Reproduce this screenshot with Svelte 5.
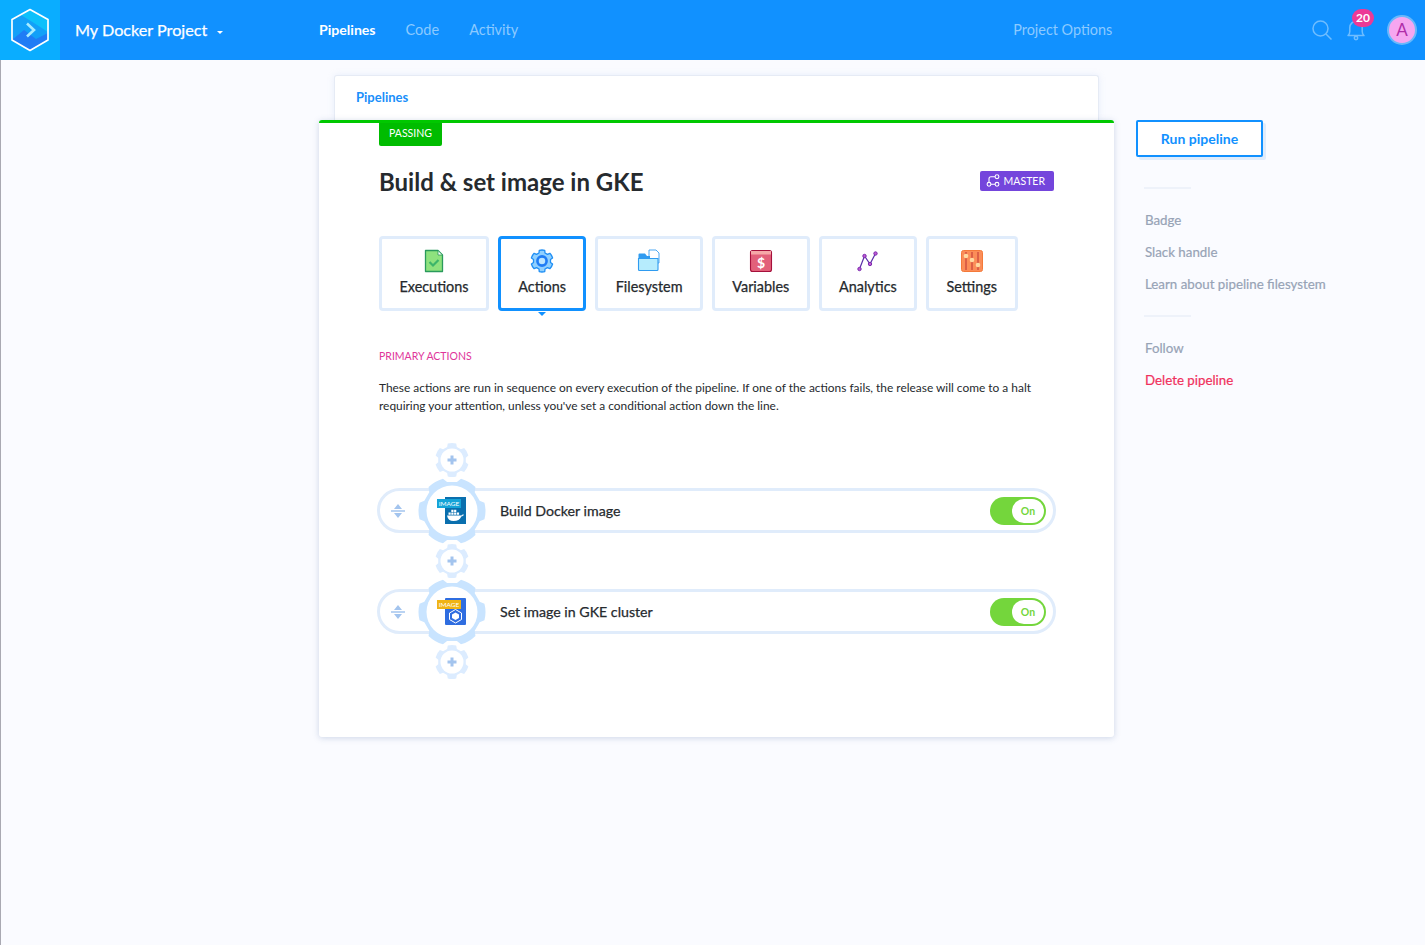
<script>
  const tabs = [
    { name: 'Executions', icon: 'exec' },
    { name: 'Actions', icon: 'actions', active: true },
    { name: 'Filesystem', icon: 'files' },
    { name: 'Variables', icon: 'vars' },
    { name: 'Analytics', icon: 'analytics' },
    { name: 'Settings', icon: 'settings' }
  ];
  const actions = [
    { title: 'Build Docker image', kind: 'docker' },
    { title: 'Set image in GKE cluster', kind: 'gke' }
  ];

  // gear outline with rounded teeth, centred on 0,0
  function gear(teeth, outer, inner, start) {
    const step = (Math.PI * 2) / teeth;
    let d = '';
    for (let i = 0; i < teeth; i++) {
      const a = i * step + start;
      const pts = [
        [inner, a - step * 0.34],
        [outer, a - step * 0.24],
        [outer, a + step * 0.24],
        [inner, a + step * 0.34]
      ].map(([r, t]) => `${(r * Math.cos(t)).toFixed(2)} ${(r * Math.sin(t)).toFixed(2)}`);
      d += `${i ? 'L' : 'M'}${pts[0]} L${pts[1]} A${outer} ${outer} 0 0 1 ${pts[2]} L${pts[3]} `;
    }
    return d + 'Z';
  }
  const bigGear = gear(6, 33.5, 29.5, 0);
  const smallGear = gear(6, 17, 14, -Math.PI / 2);
  const tabGear = gear(6, 11, 8.6, -Math.PI / 2);
</script>

<header class="topbar">
  <div class="logo">
    <svg width="42" height="44" viewBox="0 0 42 44">
      <path d="M21 1.500 39 11.500V32L21 42.500 3 32V11.500Z" fill="#12a0f8" />
      <path d="M21 1.500 39 11.500V24L25 15 12 7Z" fill="#0cc0fb" />
      <path d="M3 32 15 22 27 31 39 25V32L21 42.500Z" fill="#1f7cf5" />
      <path d="M21 1.500 39 11.500V32L21 42.500 3 32V11.500Z" fill="none" stroke="#fff" stroke-width="1.700" stroke-linejoin="round" />
      <path d="M18 15.500 25 22 18 28.500" fill="none" stroke="#a8ecff" stroke-width="2.600" />
    </svg>
  </div>
  <div class="project">My Docker Project <span class="caret"></span></div>
  <nav class="nav">
    <span class="on">Pipelines</span>
    <span>Code</span>
    <span>Activity</span>
  </nav>
  <span class="options">Project Options</span>
  <div class="tools">
    <svg width="20" height="20" viewBox="0 0 20 20" fill="none" stroke="#6fbdff" stroke-width="1.500">
      <circle cx="8.500" cy="8.500" r="7.500" /><path d="M14 14 19.500 19.500" />
    </svg>
    <div class="bell">
      <svg width="20" height="22" viewBox="0 0 20 22" fill="none" stroke="#6fbdff" stroke-width="1.500">
        <path d="M2 16.500c1.300-1 1.800-2 1.800-4V8.500a6.200 6.200 0 0 1 12.400 0v4c0 2 .5 3 1.800 4Z" stroke-linejoin="round" />
        <circle cx="10" cy="19" r="1.700" />
      </svg>
      <span class="count">20</span>
    </div>
    <div class="avatar">A</div>
  </div>
</header>

<div class="page">
  <main class="main">
    <div class="crumb">Pipelines</div>
    <section class="card">
      <span class="status">PASSING</span>
      <div class="title-row">
        <h1>Build &amp; set image in GKE</h1>
        <span class="branch">
          <svg width="14" height="13" viewBox="0 0 14 13" fill="none" stroke="#fff" stroke-width="1.100">
            <circle cx="3" cy="10.300" r="1.900" /><circle cx="11" cy="10.300" r="1.900" /><circle cx="11" cy="2.700" r="1.900" />
            <path d="M9 2.700H5Q3 2.700 3 4.700V8.400M5 10.300H9" />
          </svg>
          MASTER
        </span>
      </div>

      <div class="tabs">
        {#each tabs as tab}
          <div class="tab" class:active={tab.active}>
            <svg width="24" height="24" viewBox="0 0 24 24">
              {#if tab.icon === 'exec'}
                <path d="M3.500 1.500H16L20.500 6V22.500H3.500Z" fill="#8ee27e" stroke="#2a9a5c" stroke-width="1.300" stroke-linejoin="round" />
                <path d="M16 1.500V6H20.500Z" fill="#fff" stroke="#2a9a5c" stroke-width=".8" />
                <path d="M7.500 13 11 16.500 16.500 11" fill="none" stroke="#3cb56a" stroke-width="2.200" />
              {:else if tab.icon === 'actions'}
                <g transform="translate(12 12)">
                  <path d={tabGear} fill="#8fd0ff" stroke="#1f8ff5" stroke-width="1.300" stroke-linejoin="round" />
                  <circle r="4.600" fill="none" stroke="#1f7cf5" stroke-width="2.600" />
                  <circle r="3" fill="#bfe6ff" />
                </g>
              {:else if tab.icon === 'files'}
                <path d="M12 1H19L22 4V14H12Z" fill="#fff" stroke="#3a9ff0" stroke-width=".9" />
                <path d="M1.500 5.500Q1.500 4.500 2.500 4.500H8L10 7H13V21.500H2.500Q1.500 21.500 1.500 20.500Z" fill="#2f9bf0" />
                <path d="M1.500 9.500H21V20.500Q21 21.500 20 21.500H2.500Q1.500 21.500 1.500 20.500Z" fill="#b6ecfd" stroke="#2f9bf0" stroke-width="1.100" />
              {:else if tab.icon === 'vars'}
                <rect x="1.500" y="1.500" width="21" height="21" rx="2" fill="#e2607a" stroke="#a5103c" stroke-width="1.100" />
                <rect x="2" y="2" width="20" height="3.500" fill="#f5a8a8" />
                <text x="12" y="19" class="dollar">$</text>
              {:else if tab.icon === 'analytics'}
                <path d="M3.500 20 8.500 7 14 15 19.500 4.500" fill="none" stroke="#5b2fa8" stroke-width="1.200" />
                <g fill="#c05ad0" stroke="#7a2bb0" stroke-width="1">
                  <circle cx="3.500" cy="20" r="1.700" /><circle cx="8.500" cy="7" r="1.700" /><circle cx="14" cy="15" r="1.700" /><circle cx="19.500" cy="4.500" r="1.700" />
                </g>
              {:else}
                <rect x="1.500" y="1.500" width="21" height="21" rx="2" fill="#fb8d58" stroke="#f47a3a" stroke-width="1" />
                <path d="M6 3V21M12 3V21M18 3V21" stroke="#c9433a" stroke-width="1.200" />
                <circle cx="6" cy="7" r="2.300" fill="#ffd9a0" /><circle cx="12" cy="11" r="2.300" fill="#ffd9a0" /><circle cx="18" cy="16" r="2.300" fill="#ffd9a0" />
              {/if}
            </svg>
            <span>{tab.name}</span>
          </div>
        {/each}
      </div>

      <h2>PRIMARY ACTIONS</h2>
      <p>These actions are run in sequence on every execution of the pipeline. If one of the actions fails, the release will come to a halt requiring your attention, unless you've set a conditional action down the line.</p>

      <div class="flow">
        {#snippet adder()}
          <svg class="adder" width="34" height="36" viewBox="-17 -18 34 36">
            <path d={smallGear} fill="#dcecff" />
            <circle r="11.500" fill="#fff" />
            <path d="M0-4.500V4.500M-4.500 0H4.500" stroke="#a3c4ee" stroke-width="3" />
          </svg>
        {/snippet}
        {@render adder()}
        {#each actions as action}
          <div class="action">
            <svg class="grip" width="14" height="16" viewBox="0 0 14 16">
              <path d="M7 1 11 6H3ZM7 15 3 10H11Z" fill="#a3c4ee" />
              <path d="M0 8H14" stroke="#a3c4ee" stroke-width="1.500" />
            </svg>
            <div class="hub">
              <svg width="68" height="68" viewBox="-34 -34 68 68">
                <path d={bigGear} fill="#c9e4ff" />
                <circle r="25.500" fill="#fff" />
              </svg>
              <svg class="image" width="30" height="28" viewBox="0 0 30 28">
                {#if action.kind === 'docker'}
                  <rect x="8" y="0" width="21" height="27" fill="#0a6fae" />
                  <rect x="0" y="2" width="24" height="9" fill="#15a4d8" />
                  <text x="12" y="9" class="tag">IMAGE</text>
                  <path d="M10 18.500H23.500Q25.500 18.500 26 17 27 17.800 26.500 18.500 25 19.500 24.300 19.500 22.500 24 16.500 24 11 24 10 18.500Z" fill="#fff" />
                  <path d="M11.500 15.500h2.200v2.200h-2.200zM14.300 15.500h2.200v2.200h-2.200zM17.100 15.500h2.200v2.200h-2.200zM19.900 15.500h2.200v2.200h-2.200zM14.300 12.700h2.200v2.200h-2.200zM17.100 12.700h2.200v2.200h-2.200z" fill="#fff" />
                {:else}
                  <rect x="8" y="0" width="21" height="27" rx="1" fill="#2f6de0" />
                  <rect x="0" y="2" width="24" height="9" fill="#f0b415" />
                  <text x="12" y="9" class="tag">IMAGE</text>
                  <path d="M18.500 11.500 24.500 15V21.500L18.500 25 12.500 21.500V15Z" fill="none" stroke="#fff" stroke-width="1" />
                  <path d="M18.500 14.500 22 16.500V20L18.500 22 15 20V16.500Z" fill="#fff" />
                {/if}
              </svg>
            </div>
            <span class="action-title">{action.title}</span>
            <div class="toggle"><span>On</span></div>
          </div>
          {@render adder()}
        {/each}
      </div>
    </section>
  </main>

  <aside class="side">
    <button class="run">Run pipeline</button>
    <hr />
    <a href="#badge">Badge</a>
    <a href="#slack">Slack handle</a>
    <a href="#learn">Learn about pipeline filesystem</a>
    <hr class="second" />
    <a href="#follow">Follow</a>
    <a href="#delete" class="danger">Delete pipeline</a>
  </aside>
</div>

<style>
  :global(body) {
    background: #fafbff;
    font-family: Lato, "Open Sans", sans-serif;
    color: #262a2e;
  }

  .topbar {
    display: flex;
    align-items: center;
    height: 60px;
    background: #1191ff;
    color: #fff;
  }

  .logo {
    display: flex;
    align-items: center;
    justify-content: center;
    width: 60px;
    height: 60px;
    background: #0aadff;
  }

  .project {
    width: 244px;
    margin: 0 0 2px 15px;
    font-size: 16.200px;
    -webkit-text-stroke: 0.25px #fff;
  }

  .caret {
    display: inline-block;
    margin-left: 6px;
    vertical-align: 2px;
    border: 3.500px solid transparent;
    border-top-color: #fff;
    border-bottom-width: 0;
  }

  .nav {
    display: flex;
    gap: 30px;
    margin-bottom: 2px;
    font-size: 14.500px;
    color: #8ccaff;
  }

  .nav .on {
    color: #fff;
    font-size: 14.100px;
    font-weight: 700;
  }

  .options {
    margin: 0 0 2px 495px;
    font-size: 14.400px;
    color: #8ccaff;
  }

  .tools {
    display: flex;
    align-items: center;
    margin-left: auto;
    padding-right: 8px;
    gap: 14px;
  }

  .bell {
    position: relative;
    display: flex;
    margin-right: 7px;
  }

  .count {
    position: absolute;
    top: -10px;
    left: 6px;
    padding: 0 4px;
    border-radius: 9px;
    background: #ec3a96;
    font-size: 12px;
    font-weight: 700;
    line-height: 18px;
  }

  .avatar {
    box-sizing: border-box;
    width: 30px;
    height: 30px;
    border: 2px solid #69b8fb;
    border-radius: 50%;
    background: #f6a6f0;
    color: #b02da8;
    font-size: 17px;
    line-height: 26px;
    text-align: center;
  }

  .page {
    display: flex;
    gap: 22px;
    min-height: 885px;
    padding-left: 319px;
    border-left: 1px solid #a9a9b2;
    box-sizing: border-box;
  }

  .main {
    width: 795px;
    margin-left: -1px;
    padding-top: 15px;
  }

  .crumb {
    height: 45px;
    margin: 0 15px;
    padding-left: 21px;
    box-sizing: border-box;
    border: 1px solid #e6ebf5;
    border-bottom: 0;
    border-radius: 3px 3px 0 0;
    background: #fff;
    box-shadow: 0 0 6px rgba(180, 200, 235, 0.25);
    color: #1a8ffa;
    font-size: 13px;
    font-weight: 700;
    line-height: 42px;
  }

  .card {
    position: relative;
    height: 617px;
    box-sizing: border-box;
    padding: 0 60px;
    border-top: 3px solid #00c800;
    border-radius: 3px;
    background: #fff;
    box-shadow: 0 1px 6px rgba(90, 120, 170, 0.28);
  }

  .status {
    display: inline-block;
    padding: 0 10px 2px;
    border-radius: 0 0 2px 2px;
    background: #00bc00;
    color: #fff;
    font-size: 10.500px;
    line-height: 21px;
    vertical-align: top;
  }

  .title-row {
    display: flex;
    align-items: center;
    justify-content: space-between;
    margin-top: 21px;
  }

  h1 {
    margin: 0;
    font-size: 24px;
    font-weight: 700;
    line-height: 30px;
  }

  .branch {
    display: flex;
    align-items: center;
    gap: 4px;
    height: 20px;
    margin-top: -3px;
    padding: 0 9px 0 6px;
    border-radius: 2px;
    background: #7445dc;
    color: #fff;
    font-size: 10.500px;
  }

  .tabs {
    display: flex;
    gap: 8.800px;
    margin-top: 39px;
  }

  .tab {
    position: relative;
    display: flex;
    flex-direction: column;
    align-items: center;
    box-sizing: border-box;
    height: 75px;
    padding: 10px 17.500px 0;
    border: 3px solid #e0ecfb;
    border-radius: 4px;
    background: #fff;
    font-size: 14.400px;
  }

  .tab span {
    margin-top: 5px;
    -webkit-text-stroke: 0.25px #262a2e;
  }

  .tab.active {
    border-color: #1191ff;
  }

  .tab.active::after {
    content: '';
    position: absolute;
    bottom: -8px;
    left: 50%;
    margin-left: -4px;
    border: 4px solid transparent;
    border-top-color: #1191ff;
    border-bottom-width: 0;
  }

  .dollar {
    fill: #fff;
    font-size: 14px;
    font-weight: 700;
    text-anchor: middle;
  }

  .tag {
    fill: #fff;
    font-size: 6.500px;
    text-anchor: middle;
  }

  h2 {
    margin: 38px 0 0;
    color: #e0359a;
    font-size: 10.500px;
    font-weight: 400;
    line-height: 14px;
  }

  p {
    margin: 16px 0 0;
    font-size: 11.920px;
    line-height: 18px;
  }

  .flow {
    display: flex;
    flex-direction: column;
    margin: 27px -2px 0 -2px;
  }

  .adder {
    display: block;
    margin-left: 58px;
  }

  .action {
    position: relative;
    display: flex;
    align-items: center;
    box-sizing: border-box;
    height: 45px;
    margin: 10px 0;
    border: 3px solid #e0ecfb;
    border-radius: 23px;
    background: #fff;
  }

  .grip {
    margin-left: 11px;
  }

  .hub {
    position: relative;
    display: flex;
    align-items: center;
    justify-content: center;
    width: 68px;
    height: 39px;
    margin: 0 14px 0 13px;
  }

  .hub svg {
    flex: none;
  }

  .hub .image {
    position: absolute;
    top: 6px;
    left: 19px;
  }

  .action-title {
    flex: 1;
    font-size: 14.200px;
    -webkit-text-stroke: 0.25px #262a2e;
  }

  .toggle {
    display: flex;
    justify-content: flex-end;
    align-items: center;
    width: 56px;
    height: 28px;
    margin-right: 7px;
    padding-right: 2px;
    box-sizing: border-box;
    border-radius: 14px;
    background: #74d63c;
  }

  .toggle span {
    width: 32px;
    height: 24px;
    border-radius: 12px;
    background: #fff;
    color: #74d63c;
    font-size: 10.500px;
    font-weight: 700;
    line-height: 24px;
    text-align: center;
  }

  .side {
    display: flex;
    flex-direction: column;
    align-items: flex-start;
    padding-top: 60px;
  }

  .run {
    width: 127px;
    height: 37px;
    border: 2px solid #1191ff;
    border-radius: 2px;
    background: #fff;
    box-shadow: 3px 3px 0 #e0ecfb;
    color: #1191ff;
    font: 700 14px Lato, sans-serif;
  }

  hr {
    width: 47px;
    height: 2px;
    margin: 30px 0 15px 8px;
    border: 0;
    background: #eef2fa;
  }

  hr.second {
    margin-top: 15px;
    margin-bottom: 15px;
  }

  a {
    margin-left: 9px;
    color: #97a3b6;
    font-size: 13.300px;
    line-height: 32px;
    text-decoration: none;
    -webkit-text-stroke: 0.2px currentColor;
  }

  a.danger {
    color: #f0305c;
  }
</style>
